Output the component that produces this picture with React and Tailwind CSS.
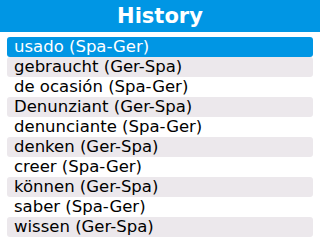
export default function App() {
  const items = [
    "usado (Spa-Ger)",
    "gebraucht (Ger-Spa)",
    "de ocasión (Spa-Ger)",
    "Denunziant (Ger-Spa)",
    "denunciante (Spa-Ger)",
    "denken (Ger-Spa)",
    "creer (Spa-Ger)",
    "können (Ger-Spa)",
    "saber (Spa-Ger)",
    "wissen (Ger-Spa)",
  ];
  return (
    <div className="w-[320px] h-[240px] bg-white overflow-hidden" style={{ fontFamily: '"DejaVu Sans", sans-serif' }}>
      <div className="h-[32px] bg-[#0096e4] flex items-center justify-center">
        <span className="text-white font-bold text-[21px] leading-[32px]">History</span>
      </div>
      <div className="pt-[5px] px-[7px] flex flex-col">
        {items.map((t, i) => (
          <div
            key={i}
            className={
              i === 0
                ? "h-[20px] rounded-[3px] bg-[#0096e4] text-white pl-[7px] text-[16.5px] leading-[20px]"
                : i % 2 === 1
                ? "h-[20px] rounded-[3px] bg-[#ece8ec] text-black pl-[7px] text-[16.5px] leading-[20px]"
                : "h-[20px] rounded-[3px] text-black pl-[7px] text-[16.5px] leading-[20px]"
            }
          >
            {t}
          </div>
        ))}
      </div>
    </div>
  );
}
